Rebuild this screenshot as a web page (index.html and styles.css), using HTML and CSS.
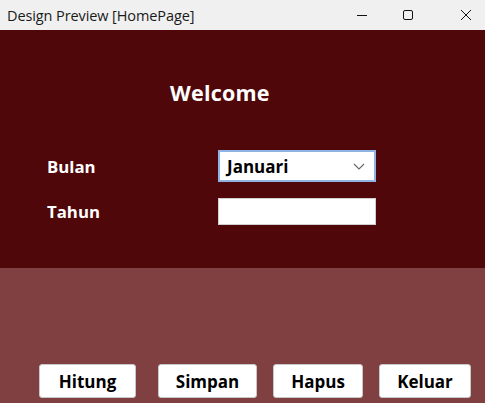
FILE: index.html
```html
<!DOCTYPE html>
<html>
<head>
<meta charset="utf-8">
<link rel="stylesheet" href="styles.css">
</head>
<body>
<div class="window">
  <div class="titlebar">
    <span class="title">Design Preview [HomePage]</span>
    <div class="controls">
      <span class="ctl"><svg width="12" height="12" viewBox="0 0 12 12"><path d="M1 6.5h10" stroke="#111" stroke-width="1"/></svg></span>
      <span class="ctl"><svg width="12" height="12" viewBox="0 0 12 12"><rect x="1.5" y="1.5" width="9" height="9" rx="1.5" fill="none" stroke="#111" stroke-width="1"/></svg></span>
      <span class="ctl"><svg width="12" height="12" viewBox="0 0 12 12"><path d="M1 1L11 11M11 1L1 11" stroke="#111" stroke-width="1"/></svg></span>
    </div>
  </div>
  <div class="top">
    <h1 class="welcome">Welcome</h1>
    <div class="form">
      <label class="lbl">Bulan</label>
      <div class="combo"><span>Januari</span><svg class="chev" width="12" height="7" viewBox="0 0 12 7"><path d="M1 1l5 5 5-5" fill="none" stroke="#666" stroke-width="1.1"/></svg></div>
      <label class="lbl">Tahun</label>
      <div class="field"></div>
    </div>
  </div>
  <div class="bottom">
    <button class="btn b1">Hitung</button>
    <button class="btn b2">Simpan</button>
    <button class="btn b3">Hapus</button>
    <button class="btn b4">Keluar</button>
  </div>
</div>
</body>
</html>
```
FILE: styles.css
```css
html, body { margin: 0; padding: 0; }
body { width: 485px; height: 403px; overflow: hidden; font-family: "Open Sans", "Noto Sans", sans-serif; }
.window { width: 485px; height: 403px; display: flex; flex-direction: column; }
.titlebar { height: 30px; background: #f0f0f0; display: flex; align-items: center; justify-content: space-between; box-sizing: border-box; padding-left: 7px; }
.title { font-size: 14.5px; color: #1a1a1a; letter-spacing: -0.1px; }
.controls { display: flex; height: 30px; }
.ctl { width: 46px; height: 30px; display: flex; align-items: center; justify-content: center; }
.controls .ctl:nth-child(1) { width: 46px; }
.controls .ctl:nth-child(3) { width: 38px; margin-left: 16px; }
.top { height: 238px; background: #4f0709; box-sizing: border-box; padding-top: 48px; }
.welcome { margin: 0 0 0 170px; font-size: 21.5px; font-weight: 700; color: #fff; line-height: 30px; letter-spacing: 0.2px; }
.form { display: grid; grid-template-columns: 171px 158px; grid-template-rows: 32px 27px; row-gap: 16px; padding-left: 47px; margin-top: 42px; align-items: center; }
.lbl { color: #fff; font-weight: 700; font-size: 16.8px; }
.combo { height: 32px; box-sizing: border-box; background: #fff; border: 2px solid #8fb4e3; display: flex; align-items: center; justify-content: space-between; padding: 0 9px 0 7px; font-weight: 700; font-size: 17px; color: #000; }
.chev { margin-top: 1px; }
.field { height: 27px; box-sizing: border-box; background: #fff; border: 1px solid #cfcfcf; }
.bottom { flex: 1; background: #803f40; display: flex; align-items: flex-start; padding-top: 96px; padding-left: 39px; }
.btn { height: 34px; box-sizing: border-box; background: #fff; border: 1px solid #c8c8c8; border-radius: 3px; font-family: "Open Sans", "Noto Sans", sans-serif; font-weight: 700; font-size: 17px; color: #000; padding: 0; line-height: 1; }
.b1 { width: 97px; }
.b2 { width: 99px; margin-left: 22px; }
.b3 { width: 90px; margin-left: 16px; }
.b4 { width: 92px; margin-left: 16px; }
```
